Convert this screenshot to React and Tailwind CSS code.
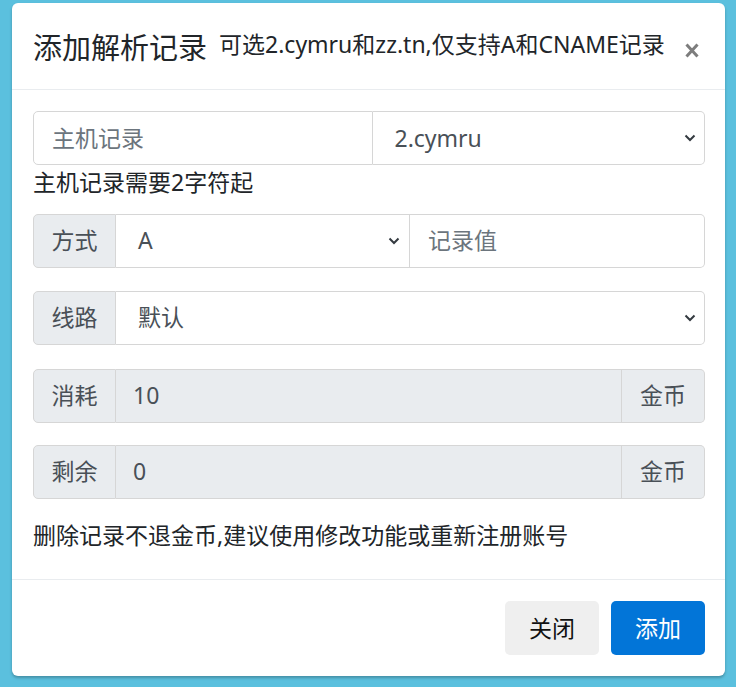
import React from "react";

const Chevron = () => (
  <svg width="12" height="8" viewBox="0 0 12 8" className="shrink-0">
    <path d="M1.5 1.5 L6 6 L10.5 1.5" fill="none" stroke="#343a40" strokeWidth="2" />
  </svg>
);

const font = { fontFamily: '"Noto Sans","Noto Sans CJK SC",sans-serif' };

export default function App() {
  return (
    <div className="w-[736px] h-[687px] bg-[#5bc0de] pl-[12px] pt-[3px]" style={font}>
      <div className="w-[713px] h-[673px] bg-white rounded-[6px] shadow-[0_2px_3px_rgba(0,0,0,0.25)] flex flex-col">
        {/* header */}
        <div className="h-[87px] border-b border-[#e9ecef] flex items-center pl-[21px] pr-[26px] shrink-0">
          <div className="text-[29px] text-[#212529] leading-none mt-[2px]">添加解析记录</div>
          <div className="text-[23px] text-[#212529] leading-none ml-[12px] -mt-[4px]">可选2.cymru和zz.tn,仅支持A和CNAME记录</div>
          <svg width="14" height="15" viewBox="0 0 14 15" className="ml-auto mt-[9px]">
            <path d="M1.5 1.5 L12.5 13.5 M12.5 1.5 L1.5 13.5" stroke="#7d7d7d" strokeWidth="3" fill="none" />
          </svg>
        </div>
        {/* body */}
        <div className="px-[21px] pr-[20px] pt-[21px] text-[23px] leading-[1.5]">
          <div className="flex h-[54px]">
            <div className="flex-1 border border-[#d6d6d6] rounded-l-[5px] flex items-center px-[18px] text-[#6c757d]">主机记录</div>
            <div className="flex-1 border border-l-0 border-[#d6d6d6] rounded-r-[5px] flex items-center pl-[22px] pr-[8px] text-[#495057]">
              <span className="flex-1">2.cymru</span>
              <Chevron />
            </div>
          </div>
          <div className="text-[#212529] mb-[14px]">主机记录需要2字符起</div>

          <div className="flex h-[54px] mb-[23px]">
            <div className="w-[83px] bg-[#e9ecef] border border-[#d6d6d6] rounded-l-[5px] flex items-center justify-center text-[#495057]">方式</div>
            <div className="w-[294px] border border-l-0 border-[#d6d6d6] flex items-center pl-[22px] pr-[9px] text-[#495057]">
              <span className="flex-1">A</span>
              <Chevron />
            </div>
            <div className="flex-1 border border-l-0 border-[#d6d6d6] rounded-r-[5px] flex items-center px-[18px] text-[#6c757d]">记录值</div>
          </div>

          <div className="flex h-[54px] mb-[24px]">
            <div className="w-[83px] bg-[#e9ecef] border border-[#d6d6d6] rounded-l-[5px] flex items-center justify-center text-[#495057]">线路</div>
            <div className="flex-1 border border-l-0 border-[#d6d6d6] rounded-r-[5px] flex items-center pl-[22px] pr-[8px] text-[#495057]">
              <span className="flex-1">默认</span>
              <Chevron />
            </div>
          </div>

          <div className="flex h-[54px] mb-[22px]">
            <div className="w-[83px] bg-[#e9ecef] border border-[#d6d6d6] rounded-l-[5px] flex items-center justify-center text-[#495057]">消耗</div>
            <div className="flex-1 bg-[#e9ecef] border border-l-0 border-[#d6d6d6] flex items-center px-[17px] text-[#495057]">10</div>
            <div className="w-[83px] bg-[#e9ecef] border border-l-0 border-[#d6d6d6] rounded-r-[5px] flex items-center justify-center text-[#495057]">金币</div>
          </div>

          <div className="flex h-[54px] mb-[19px]">
            <div className="w-[83px] bg-[#e9ecef] border border-[#d6d6d6] rounded-l-[5px] flex items-center justify-center text-[#495057]">剩余</div>
            <div className="flex-1 bg-[#e9ecef] border border-l-0 border-[#d6d6d6] flex items-center px-[17px] text-[#495057]">0</div>
            <div className="w-[83px] bg-[#e9ecef] border border-l-0 border-[#d6d6d6] rounded-r-[5px] flex items-center justify-center text-[#495057]">金币</div>
          </div>

          <div className="text-[#212529] mb-[27px]">删除记录不退金币,建议使用修改功能或重新注册账号</div>
        </div>
        {/* footer */}
        <div className="border-t border-[#e9ecef] flex justify-end gap-[12px] pt-[21px] pr-[20px] text-[23px]">
          <button className="w-[94px] h-[54px] bg-[#efefef] rounded-[5px] text-[#111]">关闭</button>
          <button className="w-[94px] h-[54px] bg-[#0275d8] rounded-[5px] text-white">添加</button>
        </div>
      </div>
    </div>
  );
}
